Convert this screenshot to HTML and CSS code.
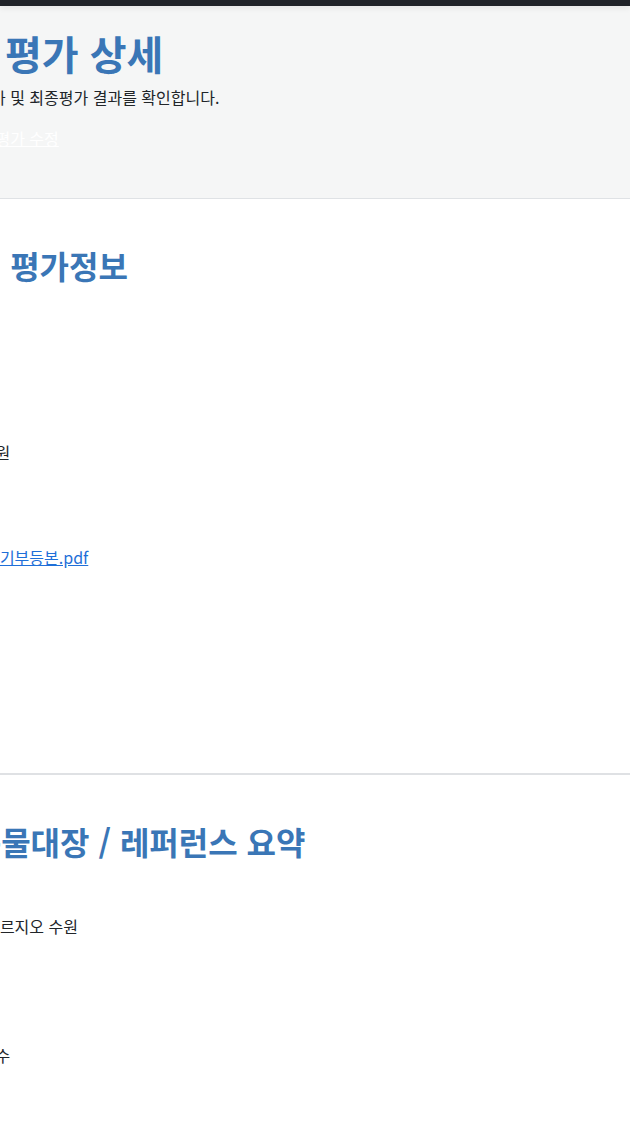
FILE: index.html
```html
<!DOCTYPE html>
<html lang="ko">
<head>
  <meta charset="UTF-8" />
  <meta name="viewport" content="width=device-width, initial-scale=1.0"/>
  <title>협력사 평가 상세</title>
  <link rel="stylesheet" href="styles.css">
</head>
<body>

  <div class="topbar"></div>

  <!-- 상단 타이틀 -->
  <header class="page-head">
    <div class="wrap">
      <h1 class="page-title">협력사 평가 상세</h1>
      <p class="lead">협력업체 현장평가 및 최종평가 결과를 확인합니다.</p>
      <div class="head-actions">
        <a href="#" class="link-edit">협력사 현장 최종평가 수정</a>
      </div>
    </div>
  </header>

  <main class="wrap">

    <!-- 평가정보 -->
    <section class="section">
      <h2 class="section-title">협력업체 평가정보</h2>
      <dl class="info">
        <div class="info-item"><dt>협력사명</dt><dd>한빛건설(주)</dd></div>
        <div class="info-item"><dt>평가일</dt><dd>2024-05-14</dd></div>
        <div class="info-item"><dt>계약금액</dt><dd>일금 삼억 오천만원</dd></div>
        <div class="info-item"><dt>평가자</dt><dd>김민수</dd></div>
        <div class="info-item"><dt>첨부파일</dt><dd><a href="#" class="file-link">한빛 본사 사옥 등기부등본.pdf</a></dd></div>
        <div class="info-item"><dt>평가등급</dt><dd>A등급</dd></div>
        <div class="info-item"><dt>총점</dt><dd>87점</dd></div>
        <div class="info-item"><dt>최종결과</dt><dd>적합</dd></div>
      </dl>
    </section>

    <hr class="divider">

    <!-- 건축물대장 / 레퍼런스 -->
    <section class="section">
      <h2 class="section-title">현장건축물대장 / 레퍼런스 요약</h2>
      <dl class="info info-summary">
        <div class="info-item"><dt>참여 현장</dt><dd>래미안 영통 및 푸르지오 수원</dd></div>
        <div class="info-item"><dt>건축물대장</dt><dd>사용승인 완료<br>위반사항 없음</dd></div>
        <div class="info-item"><dt>레퍼런스</dt><dd>시공품질 매우 우수</dd></div>
      </dl>
    </section>

  </main>

</body>
</html>
```

FILE: styles.css
```css
body {
  margin: 0;
  font-family: "Noto Sans CJK KR", "Noto Sans", sans-serif;
  font-size: 16px;
  line-height: 1.5;
  color: #212529;
  background: #fff;
  overflow-x: hidden;
}

.topbar {
  position: relative;
  height: 6px;
  background: #202329;
  box-shadow: 0 2px 6px rgba(0,0,0,0.08);
}

.wrap {
  margin-left: -116.6px;
}

.page-head {
  background: #f5f6f6;
  border-bottom: 1px solid #dfe2e5;
  padding: 23px 0 48px;
}

.page-title {
  margin: 0 0 8px;
  font-size: 40px;
  line-height: 1.2;
  font-weight: 700;
  color: #3a76b6;
}

.lead {
  margin: 0 0 17px;
}

.link-edit {
  color: #fff;
  text-decoration: underline;
}

.section {
  padding: 47px 0 41.6px;
}

.section-title {
  margin: 0 0 27px;
  font-size: 32px;
  line-height: 1.2;
  font-weight: 700;
  color: #3a76b6;
}

.info {
  margin: 0;
}

.info-summary {
  padding-top: 3px;
}

.info-item {
  margin-bottom: 4.5px;
}

.info dt {
  font-weight: 700;
}

.info dd {
  margin: 0;
}

.file-link {
  color: #1f6fd8;
}

.divider {
  margin: 0;
  border: 0;
  border-top: 2px solid #dfe1e4;
}
```
